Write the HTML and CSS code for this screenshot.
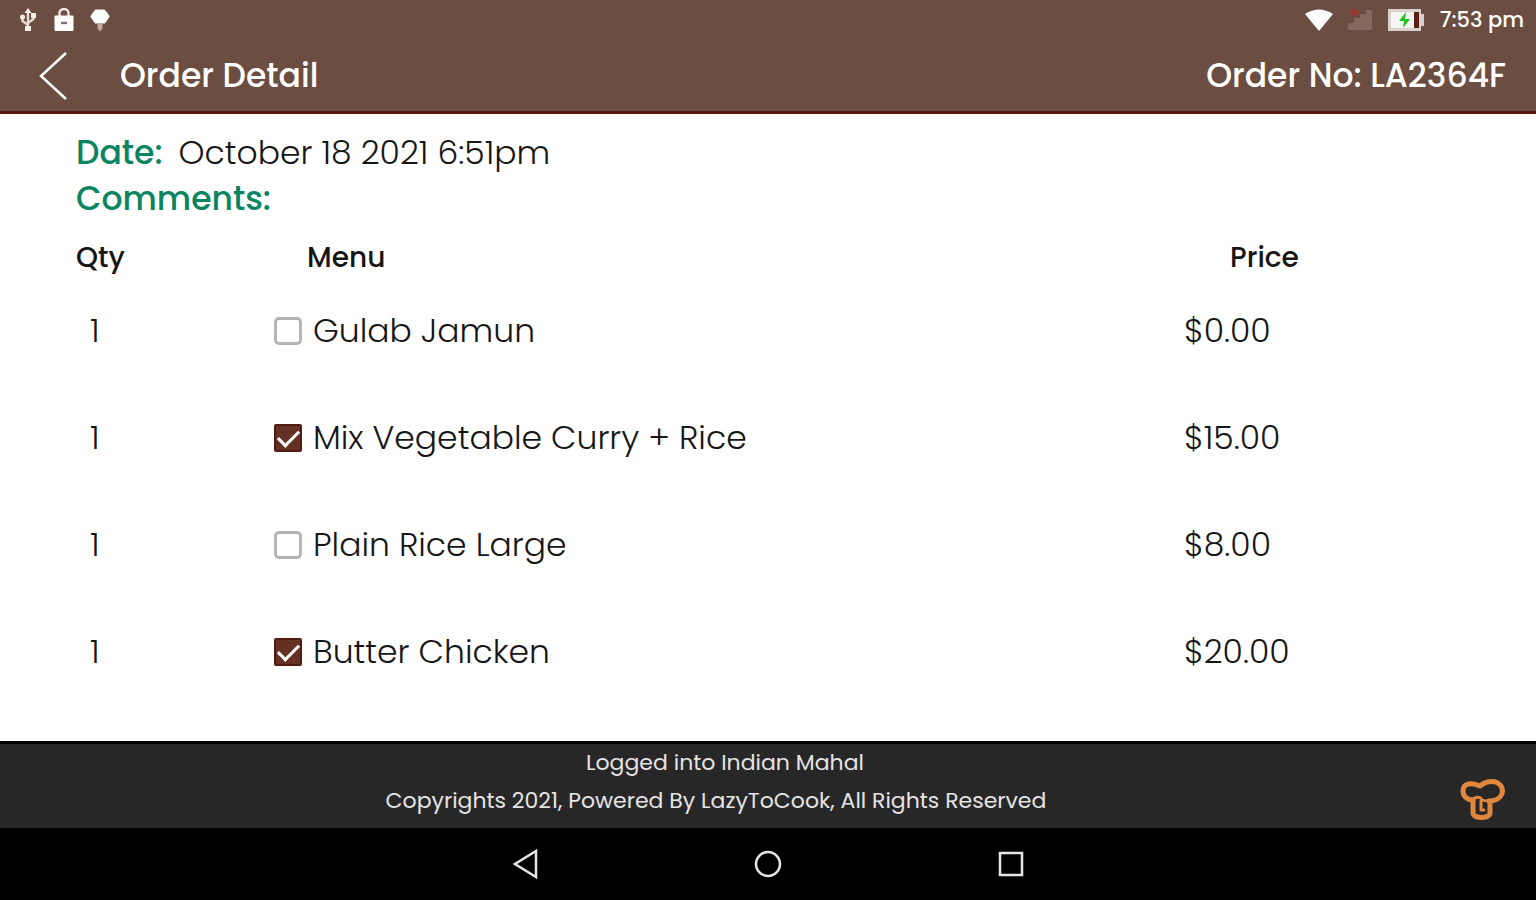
FILE: index.html
```html
<!DOCTYPE html>
<html lang="en">
<head>
<meta charset="utf-8">
<meta name="viewport" content="width=device-width, initial-scale=1">
<title>Order Detail</title>
<link rel="stylesheet" href="styles.css">
</head>
<body class="app">
<header class="top">
  <div class="status">
    <div class="status-group">
      <svg class="status-icon" viewBox="0 0 24 24" fill="none" stroke="#e6dcd7" stroke-width="2.400" aria-label="USB"><path d="M12 4v17M12 17L6.500 13V9M12 15l5.500-4V8"/><path d="M12 0l3.500 5h-7z" fill="#f3ece8" stroke="none"/><circle cx="6.500" cy="9" r="2.500" fill="#f3ece8" stroke="none"/><path d="M15 5h5v5h-5zM9 18h6v5H9z" fill="#f3ece8" stroke="none"/></svg>
      <svg class="status-icon" viewBox="0 0 24 24" fill="none" aria-label="Locked"><path d="M7.500 10V5a4.500 4 0 0 1 9 0v5" stroke="#eee8e5" stroke-width="2.400"/><rect x="2.500" y="7.500" width="19" height="15.500" rx="1" fill="#fff"/><path d="M9 15h6" stroke="#8a7068" stroke-width="2.400"/></svg>
      <svg class="status-icon" viewBox="0 0 24 24" aria-label="Notification"><path d="M8 3h8l4 5.500-4 5.500H8L4 8.500z" fill="#fff" stroke="#fff" stroke-width="3" stroke-linejoin="round"/><path d="M9.500 15.500h5v5L12 23.500l-2.500-3z" fill="#b9aaa3"/></svg>
    </div>
    <div class="status-group status-right">
      <svg class="wifi" viewBox="0 0 28 24" aria-label="Wi-Fi"><path d="M0 6Q14-3 28 6L14 23z" fill="#fff"/></svg>
      <svg class="status-icon signal" viewBox="0 0 24 24" aria-label="No signal"><path d="M0 22v-7h6v-5h6V6h6V2h6v20z" fill="#84695f"/><path d="M4 2l5 5M9 2L4 7" stroke="#ad2a2a" stroke-width="2.500"/></svg>
      <svg class="battery" viewBox="0 0 38 24" aria-label="Charging"><path d="M1 1h33v5h3v12h-3v5H1z" fill="#d8d1cd"/><path d="M4 4h23v16H4z" fill="#f5f5f5"/><path d="M27 4h5v16h-5z" fill="#5a2016"/><path d="M19 4l-7 9h5l-1 7 7-9h-5z" fill="#1dc51d"/></svg>
      <time class="clock">7:53 pm</time>
    </div>
  </div>
  <div class="titlebar">
    <button class="back" type="button" aria-label="Back"><svg viewBox="0 0 30 48" fill="none" stroke="#fff" stroke-width="2.500"><path d="M28 1L3 24l25 23"/></svg></button>
    <h1 class="title">Order Detail</h1>
    <p class="order-no">Order No: LA2364F</p>
  </div>
</header>
<main class="content">
  <dl class="meta">
    <div class="meta-row"><dt>Date:</dt><dd>October 18 2021 6:51pm</dd></div>
    <div class="meta-row"><dt>Comments:</dt><dd></dd></div>
  </dl>
  <table class="items">
    <thead><tr><th class="qty">Qty</th><th class="menu">Menu</th><th class="price">Price</th></tr></thead>
    <tbody>
      <tr><td class="qty">1</td><td><label class="item"><input type="checkbox">Gulab Jamun</label></td><td class="price">$0.00</td></tr>
      <tr><td class="qty">1</td><td><label class="item"><input type="checkbox" checked>Mix Vegetable Curry + Rice</label></td><td class="price">$15.00</td></tr>
      <tr><td class="qty">1</td><td><label class="item"><input type="checkbox">Plain Rice Large</label></td><td class="price">$8.00</td></tr>
      <tr><td class="qty">1</td><td><label class="item"><input type="checkbox" checked>Butter Chicken</label></td><td class="price">$20.00</td></tr>
    </tbody>
  </table>
</main>
<footer class="footer">
  <div class="legal">
    <p class="login">Logged into Indian Mahal</p>
    <p>Copyrights 2021, Powered By LazyToCook, All Rights Reserved</p>
  </div>
  <svg class="logo" viewBox="0 0 46 42" fill="none" stroke="#df883d" stroke-width="5" stroke-linejoin="round" stroke-linecap="round" aria-label="LazyToCook"><path d="M13 21C7 21 3 17 3 12 3 4 12 3 20 7 27 1 37 1 41 7 45 14 40 22 29 22"/><path d="M13 21V34c0 6 17 6 17 0V23"/><path d="M13 21c3-4 8-3 9 0 2 1 5 1 8 1" stroke-width="3"/><path d="M21 22v9h3" stroke-width="3"/></svg>
</footer>
<nav class="nav" aria-label="System">
  <button type="button" aria-label="Back"><svg viewBox="0 0 30 30"><path d="M26 2v26L5 15z"/></svg></button>
  <button type="button" aria-label="Home"><svg viewBox="0 0 30 30"><circle cx="15" cy="15" r="12"/></svg></button>
  <button type="button" aria-label="Recent apps"><svg viewBox="0 0 30 30"><rect x="4" y="4" width="22" height="22"/></svg></button>
</nav>
</body>
</html>
```
FILE: styles.css
```css
* { box-sizing: border-box; }

.app {
  margin: 0;
  min-height: 100vh;
  display: flex;
  flex-direction: column;
  background: #fff;
  color: #161616;
  font-family: Poppins, Inter, "Open Sans", sans-serif;
  font-size: 33px;
  font-weight: 300;
  line-height: 46px;
}

h1, p, dl, dd { margin: 0; }
button { padding: 0; border: 0; background: none; cursor: pointer; }
svg { display: block; }

.top {
  background: #6c4d42;
  border-bottom: 3px solid #581509;
  color: #fff;
}
.status {
  display: flex;
  justify-content: space-between;
  height: 40px;
  padding: 0 12px 0 16px;
}
.status-group { display: flex; align-items: center; gap: 12px; }
.status-icon { width: 24px; height: 24px; }
.status-right { gap: 15px; }
.wifi { width: 28px; height: 24px; }
.battery { width: 38px; height: 24px; }
.clock { font-size: 21px; font-weight: 500; line-height: 32px; }

.titlebar {
  display: flex;
  align-items: center;
  height: 71px;
  padding: 0 30px 0 38px;
}
.back { width: 30px; height: 48px; margin-right: 52px; }
.back svg { width: 30px; height: 48px; }
.title, .order-no { font-size: 33px; font-weight: 500; line-height: 48px; }
.order-no { margin-left: auto; }

.content { flex: 1; padding: 16px 0 0 76px; }
.meta-row { display: flex; gap: 16px; }
.meta dt { color: #0b8460; font-weight: 500; }

.items { width: 100%; border-collapse: collapse; table-layout: fixed; }
.items th, .items td { padding: 0; text-align: left; }
.items th { height: 72px; font-size: 28px; font-weight: 500; }
.items td { height: 107px; vertical-align: top; padding-top: 14px; }
.items .qty { width: 198px; }
.items td.qty { padding-left: 14px; }
.items th.menu { padding-left: 33px; }
.items .price { width: 352px; }
.items th.price { padding-left: 46px; }

.item { display: flex; align-items: center; gap: 11px; }
.item input {
  appearance: none;
  width: 28px;
  height: 28px;
  margin: 0;
  border: 3px solid #b4b4b4;
  border-radius: 5px;
  display: grid;
  place-items: center;
}
.item input:checked { background: #653124; border: 2px solid #521a10; border-radius: 2px; }
.item input:checked::before {
  content: "";
  width: 18px;
  height: 9px;
  border: solid #fff;
  border-width: 0 0 3px 3px;
  rotate: -45deg;
  margin-bottom: 5px;
}

.footer {
  display: flex;
  align-items: center;
  height: 87px;
  padding: 0 30px 0 0;
  background: #282728;
  border-top: 3px solid #000;
  color: #e4e4e4;
  font-size: 22px;
  font-weight: 400;
  line-height: 38px;
}
.legal { flex: 1; padding-bottom: 8px; padding-right: 28px; text-align: center; }
.login { padding-left: 18px; }
.logo { width: 46px; height: 42px; margin-top: 28px; }

.nav {
  display: flex;
  justify-content: center;
  align-items: center;
  gap: 213px;
  height: 72px;
  background: #000;
}
.nav button, .nav svg { width: 30px; height: 30px; }
.nav svg { fill: none; stroke: #e6e6e6; stroke-width: 2.500; }
```
